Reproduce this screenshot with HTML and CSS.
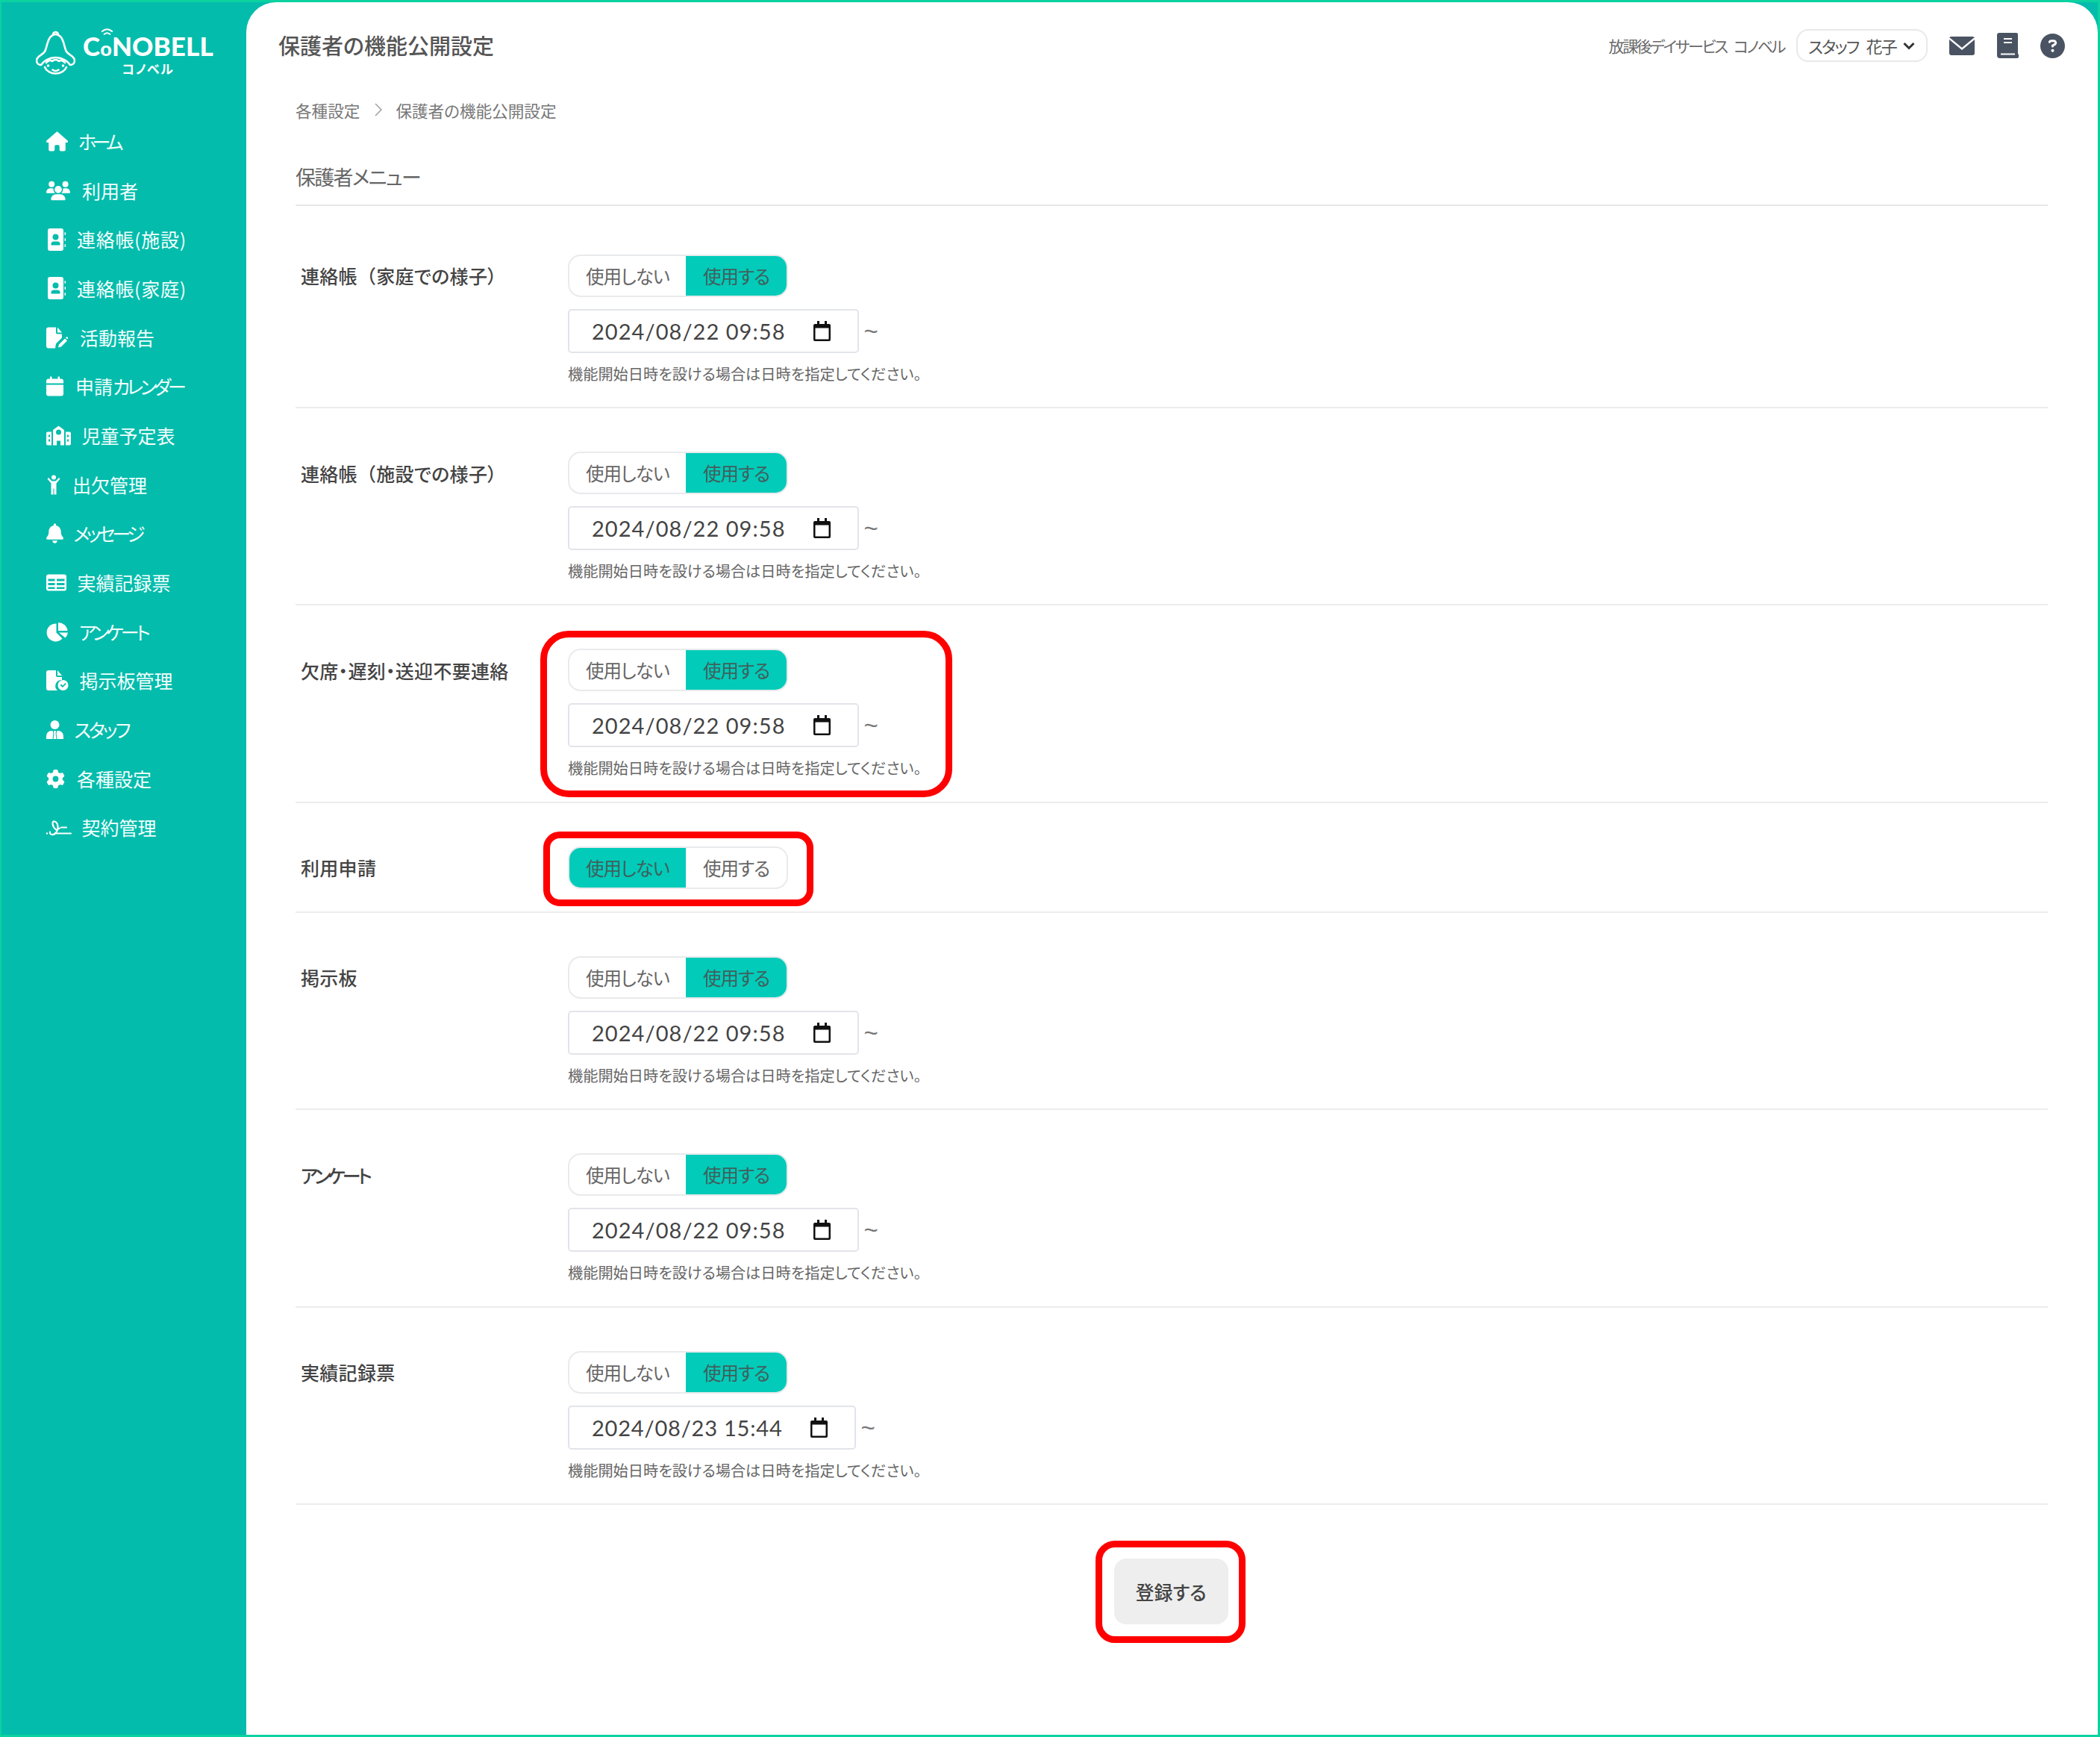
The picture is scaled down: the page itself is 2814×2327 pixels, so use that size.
FILE: index.html
```html
<!DOCTYPE html>
<html lang="ja">
<head>
<meta charset="utf-8">
<title>保護者の機能公開設定</title>
<link rel="stylesheet" href="styles.css">
</head>
<body>
<svg class="defs" width="0" height="0" aria-hidden="true">
  <symbol id="cal" viewBox="0 0 23 27">
    <path d="M5 0h3v4h7V0h3v4h3a2 2 0 0 1 2 2v19a2 2 0 0 1-2 2H2a2 2 0 0 1-2-2V6a2 2 0 0 1 2-2h3zM2.500 9.500V24.500H20.500V9.500z" fill="#111" fill-rule="evenodd"/>
  </symbol>
  <symbol id="contact" viewBox="0 0 24 30">
    <path fill-rule="evenodd" d="M3 0h15a3 3 0 0 1 3 3v24a3 3 0 0 1-3 3H3a3 3 0 0 1-3-3V3a3 3 0 0 1 3-3zM10.500 7.500a4 4 0 1 0 0 8 4 4 0 0 0 0-8zM4.500 22.500h12v-1.500a3.500 3.500 0 0 0-3.500-3.500H8a3.500 3.500 0 0 0-3.500 3.500z"/>
    <rect x="22.500" y="5" width="1.500" height="4" rx=".7"/><rect x="22.500" y="13" width="1.500" height="4" rx=".7"/><rect x="22.500" y="21" width="1.500" height="4" rx=".7"/>
  </symbol>
</svg>
<div class="app">
  <aside class="sidebar">
    <div class="logo">
      <svg class="logo-bell" viewBox="0 0 53 60" fill="none" stroke="#fff" stroke-width="2.600" stroke-linecap="round" stroke-linejoin="round">
        <path d="M23 6.500a3.500 3.500 0 1 1 7 0"/>
        <path d="M20 9C15 14 15 24 12 29C9 34 1 35 1 41C1 45 4 47 7 47C10 42 18 37 26.500 37C35 37 43 42 46 47C49 47 52 45 52 41C52 35 44 34 41 29C38 24 38 14 33 9C29 5 24 5 20 9z"/>
        <path d="M14 44Q18 39 22 42Q26.500 38 31 42Q35 39 39 44"/>
        <path d="M12 50C14 55 20 58.500 26.500 58.500C33 58.500 39 55 41 50"/>
        <path d="M22.500 53.500Q26.500 56.500 30.500 53.500"/>
        <circle cx="16.500" cy="48" r="1.800" fill="#fff" stroke="none"/>
        <circle cx="36.500" cy="48" r="1.800" fill="#fff" stroke="none"/>
      </svg>
      <div class="logo-words">
        <div class="logo-name">C<span class="logo-o">o<svg class="logo-wifi" viewBox="0 0 18 11" fill="none" stroke="#fff" stroke-width="2.200" stroke-linecap="round"><path d="M2 5c4-4 10-4 14 0M5 9c2.500-2 5.500-2 8 0"/></svg></span>NOBELL</div>
        <div class="logo-kana">コノベル</div>
      </div>
    </div>
    <nav class="nav">
      <a class="nav-item nav-home"><svg class="ni" style="width:29px" viewBox="0 0 576 512"><path d="M575.800 255.500c0 18-15 32.100-32 32.100h-32l.7 160.200c0 2.700-.2 5.400-.5 8.100V472c0 22.100-17.900 40-40 40H456c-1.100 0-2.200 0-3.300-.1c-1.400 .1-2.800 .1-4.200 .1H416 392c-22.100 0-40-17.900-40-40V448 384c0-17.700-14.300-32-32-32H256c-17.700 0-32 14.300-32 32v64 24c0 22.100-17.900 40-40 40H160 128.100c-1.500 0-3-.1-4.500-.2c-1.200 .1-2.400 .2-3.600 .2H104c-22.100 0-40-17.900-40-40V360c0-.9 0-1.900 .1-2.800V287.600H32c-18 0-32-14-32-32.100c0-9 3-17 10-24L266.400 8c7-7 15-8 22-8s15 2 21 7L564.800 231.500c8 7 12 15 11 24z"/></svg><span class="kana-home">ホーム</span></a>
      <a class="nav-item"><svg class="ni" style="width:32px" viewBox="0 0 640 512"><path d="M144 0a80 80 0 1 1 0 160A80 80 0 1 1 144 0zM512 0a80 80 0 1 1 0 160A80 80 0 1 1 512 0zM0 298.700C0 239.800 47.800 192 106.700 192h42.700c15.900 0 31 3.500 44.600 9.700c-1.300 7.200-1.900 14.700-1.900 22.300c0 38.200 16.800 72.500 43.300 96c-.2 0-.4 0-.7 0H21.300C9.600 320 0 310.400 0 298.700zM405.300 320c-.2 0-.4 0-.7 0c26.600-23.500 43.300-57.800 43.300-96c0-7.600-.7-15-1.900-22.300c13.600-6.300 28.700-9.700 44.600-9.700h42.700C592.200 192 640 239.800 640 298.700c0 11.800-9.600 21.300-21.300 21.300H405.300zM224 224a96 96 0 1 1 192 0 96 96 0 1 1 -192 0zM128 485.300C128 411.700 187.700 352 261.300 352H378.700C452.300 352 512 411.700 512 485.300c0 14.700-11.900 26.700-26.700 26.700H154.700c-14.700 0-26.700-11.900-26.700-26.700z"/></svg><span>利用者</span></a>
      <a class="nav-item nav-inset"><svg class="ni" style="width:24px;height:30px"><use href="#contact"/></svg><span class="paren-wide">連絡帳(施設)</span></a>
      <a class="nav-item nav-inset"><svg class="ni" style="width:24px;height:30px"><use href="#contact"/></svg><span class="paren-wide">連絡帳(家庭)</span></a>
      <a class="nav-item"><svg class="ni" style="width:29px" viewBox="0 0 29 28"><path d="M3 0h10v7a2 2 0 0 0 2 2h6v5l-8 8-1 6H3a3 3 0 0 1-3-3V3a3 3 0 0 1 3-3zM15 0l6 7h-6z"/><path d="M16 27l1-4 8-8 3 3-8 8zM26 14l1-1a1.500 1.500 0 0 1 2 2l-1 1z"/></svg><span>活動報告</span></a>
      <a class="nav-item"><svg class="ni" style="width:23px" viewBox="0 0 23 26"><path d="M5 0h2.500v3h8V0H18v3h2a3 3 0 0 1 3 3v3H0V6a3 3 0 0 1 3-3h2zM0 11h23v12a3 3 0 0 1-3 3H3a3 3 0 0 1-3-3z"/></svg><span>申請<span class="kana">カレンダー</span></span></a>
      <a class="nav-item nav-tight"><svg class="ni" style="width:33px" viewBox="0 0 33 26"><path fill-rule="evenodd" d="M16.500 0L24 5.500V26H19v-6h-5v6H9V5.500zM16.500 5a3.500 3.500 0 1 0 0 7 3.500 3.500 0 0 0 0-7zM0 10a2 2 0 0 1 2-2h5v18H2a2 2 0 0 1-2-2zM3 12v3h2v-3zM3 18v3h2v-3zM26 8h5a2 2 0 0 1 2 2v14a2 2 0 0 1-2 2h-5zM28 12v3h2v-3zM28 18v3h2v-3z"/></svg><span>児童予定表</span></a>
      <a class="nav-item nav-child"><svg class="ni" style="width:18px" viewBox="0 0 18 26"><circle cx="9" cy="3" r="3"/><path d="M.5 5l1.500-1.500L6.500 8h5L16 3.500 17.500 5 12.500 11v5V26h-3V18h-1V26h-3V11z"/></svg><span>出欠管理</span></a>
      <a class="nav-item nav-tight"><svg class="ni" style="width:23px" viewBox="0 0 448 512"><path d="M224 0c-17.700 0-32 14.300-32 32V51.200C119 66 64 130.600 64 208v18.800c0 47-17.300 92.400-48.500 127.600l-7.400 8.300c-8.400 9.400-10.400 22.900-5.300 34.400S19.400 416 32 416H416c12.600 0 24-7.400 29.200-18.900s3.100-25-5.300-34.400l-7.400-8.300C401.300 319.200 384 273.900 384 226.800V208c0-77.400-55-142-128-156.800V32c0-17.700-14.300-32-32-32zm45.300 493.300c12-12 18.700-28.300 18.700-45.300H224 160c0 17 6.700 33.300 18.700 45.300s28.300 18.700 45.300 18.700s33.300-6.700 45.300-18.700z"/></svg><span class="kana kana-msg">メッセージ</span></a>
      <a class="nav-item nav-tight"><svg class="ni" style="width:27px" viewBox="0 0 27 22"><path fill-rule="evenodd" d="M3 0h21a3 3 0 0 1 3 3v16a3 3 0 0 1-3 3H3a3 3 0 0 1-3-3V3a3 3 0 0 1 3-3zM2.500 6v3h9V6zM14 6v3h10.500V6zM2.500 11.500v3h9v-3zM14 11.500v3h10.500v-3zM2.500 17v2.500h9V17zM14 17v2.500h10.500V17z"/></svg><span>実績記録票</span></a>
      <a class="nav-item nav-inset"><svg class="ni" style="width:27px" viewBox="0 0 27 25"><path d="M11.500 1.500V13.500l8 8A12 12 0 1 1 11.500 1.500z"/><path d="M14 0a12.500 12.500 0 0 1 12.500 11H14z"/><path d="M15 13.500h12a12 12 0 0 1-3.500 7z"/></svg><span class="kana">アンケート</span></a>
      <a class="nav-item nav-tight"><svg class="ni" style="width:30px" viewBox="0 0 30 27"><path d="M3 0h10v7a2 2 0 0 0 2 2h6v4a8 8 0 0 0-6 14H3a3 3 0 0 1-3-3V3a3 3 0 0 1 3-3zM15 0l6 7h-6z"/><path fill-rule="evenodd" d="M22.500 13a7 7 0 1 1 0 14 7 7 0 0 1 0-14zM18.500 20l1.500-1.500 2 2 3.500-3.500 1.200 1.300-4.700 4.700z"/></svg><span>掲示板管理</span></a>
      <a class="nav-item nav-tight"><svg class="ni" style="width:23px" viewBox="0 0 23 25"><circle cx="11.500" cy="6" r="6"/><path d="M6 14l2.500 0 1 3-1 8H0v-3a8 8 0 0 1 6-8zM17 14h-2.500l-1 3 1 8H23v-3a8 8 0 0 0-6-8zM10.500 14h2l.5 2-.5 1 1 8h-4l1-8-.5-1z"/></svg><span class="kana-staff">スタッフ</span></a>
      <a class="nav-item"><svg class="ni" style="width:25px" viewBox="0 0 512 512"><path d="M495.900 166.600c3.200 8.700 .5 18.400-6.400 24.600l-43.300 39.400c1.100 8.300 1.700 16.800 1.700 25.400s-.6 17.100-1.700 25.400l43.300 39.400c6.900 6.200 9.600 15.900 6.400 24.600c-4.400 11.900-9.700 23.300-15.800 34.300l-4.700 8.100c-6.600 11-14 21.400-22.100 31.200c-5.900 7.200-15.700 9.600-24.500 6.800l-55.700-17.700c-13.400 10.300-28.200 18.900-44 25.400l-12.500 57.100c-2 9.100-9 16.300-18.200 17.800c-13.800 2.300-28 3.500-42.500 3.500s-28.700-1.200-42.500-3.500c-9.200-1.500-16.200-8.700-18.200-17.800l-12.500-57.100c-15.800-6.500-30.600-15.100-44-25.400L83.100 425.900c-8.800 2.800-18.600 .3-24.500-6.800c-8.100-9.800-15.500-20.200-22.100-31.200l-4.700-8.100c-6.100-11-11.400-22.400-15.800-34.300c-3.200-8.700-.5-18.400 6.400-24.600l43.300-39.400C64.600 273.100 64 264.600 64 256s.6-17.100 1.700-25.400L22.400 191.200c-6.900-6.200-9.600-15.900-6.400-24.600c4.400-11.900 9.700-23.300 15.800-34.300l4.700-8.100c6.600-11 14-21.400 22.100-31.200c5.900-7.200 15.700-9.600 24.500-6.800l55.700 17.700c13.400-10.300 28.200-18.900 44-25.400l12.500-57.100c2-9.100 9-16.300 18.200-17.800C227.300 1.200 241.500 0 256 0s28.700 1.200 42.500 3.500c9.200 1.500 16.200 8.700 18.200 17.800l12.500 57.100c15.800 6.500 30.600 15.100 44 25.400l55.700-17.700c8.800-2.800 18.600-.3 24.500 6.800c8.100 9.800 15.500 20.200 22.100 31.200l4.700 8.100c6.100 11 11.400 22.400 15.800 34.300zM256 336a80 80 0 1 0 0-160 80 80 0 1 0 0 160z"/></svg><span>各種設定</span></a>
      <a class="nav-item nav-tight"><svg class="ni ni-line" style="width:33px" viewBox="0 0 33 22"><circle cx="1" cy="19" r="1.200" fill="#fff" stroke="none"/><path d="M5 17c-1 4 5 5 8 1c4-5 3-14-2-15c-4-1-3 7 2 11c2 1 3-2 5-2"/><path d="M12 19H33M20 11h7"/></svg><span>契約管理</span></a>
    </nav>
  </aside>

  <main class="main">
    <header class="topbar">
      <h1 class="page-title">保護者の機能公開設定</h1>
      <div class="top-right">
        <span class="facility">放課後デイサービス コノベル</span>
        <div class="user-select"><span>スタッフ 花子</span>
          <svg class="chev" viewBox="0 0 16 11" fill="none" stroke="#333" stroke-width="3"><path d="M1.500 2l6.500 6.500L14.500 2"/></svg>
        </div>
        <svg class="ti ti-mail" viewBox="0 0 34 25"><rect width="34" height="25" rx="3" fill="#4a5362"/><path d="M0 2.500l17 14 17-14" fill="none" stroke="#fff" stroke-width="2.400"/></svg>
        <svg class="ti ti-book" viewBox="0 0 29 34"><path fill="#4a5362" d="M3 0h23a2 2 0 0 1 2 2v26l1 1v3a2 2 0 0 1-2 2H4a4 4 0 0 1-4-4V3a3 3 0 0 1 3-3z"/><path d="M9 8h11M9 13h11M5 28.500h19" stroke="#fff" stroke-width="2" fill="none"/></svg>
        <svg class="ti ti-help" viewBox="0 0 512 512"><path fill="#4a5362" d="M256 512A256 256 0 1 0 256 0a256 256 0 1 0 0 512zM169.800 165.300c7.900-22.300 29.100-37.300 52.800-37.300h58.300c34.900 0 63.100 28.300 63.100 63.100c0 22.600-12.100 43.500-31.700 54.800L280 264.400c-.2 13-10.900 23.600-24 23.600c-13.300 0-24-10.700-24-24V250.500c0-8.600 4.600-16.500 12.100-20.800l44.300-25.400c4.700-2.700 7.600-7.700 7.600-13.100c0-8.400-6.800-15.100-15.100-15.100H222.600c-3.400 0-6.400 2.100-7.500 5.300l-.4 1.200c-4.400 12.500-18.200 19-30.600 14.600s-19-18.200-14.600-30.600l.4-1.200zM224 352a32 32 0 1 1 64 0 32 32 0 1 1 -64 0z"/></svg>
      </div>
    </header>

    <div class="content">
      <div class="breadcrumb"><span>各種設定</span><svg class="crumb-sep" viewBox="0 0 10 18" fill="none" stroke="#999" stroke-width="1.400"><path d="M1 1l8 8-8 8"/></svg><span>保護者の機能公開設定</span></div>
      <h2 class="section-title">保護者メニュー</h2>

      <section class="row row-first">
        <div class="row-label"><span>連絡帳<span class="full-paren">（</span>家庭での様子）</span></div>
        <div class="row-ctrl">
          <div class="toggle"><span class="opt">使用しない</span><span class="opt on">使用する</span></div>
          <div class="date-line"><div class="date-input"><span>2024/08/22 09:58</span><svg class="cal"><use href="#cal"/></svg></div><span class="tilde">~</span></div>
          <p class="hint">機能開始日時を設ける場合は日時を指定してください。</p>
        </div>
      </section>

      <section class="row">
        <div class="row-label"><span>連絡帳<span class="full-paren">（</span>施設での様子）</span></div>
        <div class="row-ctrl">
          <div class="toggle"><span class="opt">使用しない</span><span class="opt on">使用する</span></div>
          <div class="date-line"><div class="date-input"><span>2024/08/22 09:58</span><svg class="cal"><use href="#cal"/></svg></div><span class="tilde">~</span></div>
          <p class="hint">機能開始日時を設ける場合は日時を指定してください。</p>
        </div>
      </section>

      <section class="row">
        <div class="row-label">欠席・遅刻・送迎不要連絡</div>
        <div class="row-ctrl">
          <div class="mark mark-a"></div>
          <div class="toggle"><span class="opt">使用しない</span><span class="opt on">使用する</span></div>
          <div class="date-line"><div class="date-input"><span>2024/08/22 09:58</span><svg class="cal"><use href="#cal"/></svg></div><span class="tilde">~</span></div>
          <p class="hint">機能開始日時を設ける場合は日時を指定してください。</p>
        </div>
      </section>

      <section class="row row-short">
        <div class="row-label">利用申請</div>
        <div class="row-ctrl">
          <div class="mark mark-b"></div>
          <div class="toggle"><span class="opt on">使用しない</span><span class="opt">使用する</span></div>
        </div>
      </section>

      <section class="row">
        <div class="row-label">掲示板</div>
        <div class="row-ctrl">
          <div class="toggle"><span class="opt">使用しない</span><span class="opt on">使用する</span></div>
          <div class="date-line"><div class="date-input"><span>2024/08/22 09:58</span><svg class="cal"><use href="#cal"/></svg></div><span class="tilde">~</span></div>
          <p class="hint">機能開始日時を設ける場合は日時を指定してください。</p>
        </div>
      </section>

      <section class="row">
        <div class="row-label"><span class="kana">アンケート</span></div>
        <div class="row-ctrl">
          <div class="toggle"><span class="opt">使用しない</span><span class="opt on">使用する</span></div>
          <div class="date-line"><div class="date-input"><span>2024/08/22 09:58</span><svg class="cal"><use href="#cal"/></svg></div><span class="tilde">~</span></div>
          <p class="hint">機能開始日時を設ける場合は日時を指定してください。</p>
        </div>
      </section>

      <section class="row">
        <div class="row-label">実績記録票</div>
        <div class="row-ctrl">
          <div class="toggle"><span class="opt">使用しない</span><span class="opt on">使用する</span></div>
          <div class="date-line"><div class="date-input date-narrow"><span>2024/08/23 15:44</span><svg class="cal"><use href="#cal"/></svg></div><span class="tilde">~</span></div>
          <p class="hint">機能開始日時を設ける場合は日時を指定してください。</p>
        </div>
      </section>

      <div class="actions">
        <div class="submit-wrap">
          <div class="mark mark-c"></div>
          <button class="submit" type="button">登録する</button>
        </div>
      </div>
    </div>
  </main>
</div>
</body>
</html>
```
FILE: styles.css
```css
* { box-sizing: border-box; }
html, body { margin: 0; padding: 0; }
body {
  width: 2814px;
  height: 2327px;
  overflow: hidden;
  font-family: "Noto Sans CJK JP", "Noto Sans", sans-serif;
  font-feature-settings: "palt";
  color: #555;
  background: #fff;
}
.defs { position: absolute; }

.app {
  display: flex;
  width: 2814px;
  height: 2327px;
  background: #04bcac;
  border: solid #0bd2a0;
  border-width: 3px 3px 3px 2px;
}

/* Sidebar */
.sidebar { width: 328px; flex: none; color: #fff; }
.logo {
  display: flex;
  align-items: flex-start;
  gap: 10px;
  margin: 37px 0 0 46px;
  height: 59px;
}
.logo-bell { width: 53px; height: 60px; flex: none; }
.logo-words { display: flex; flex-direction: column; align-items: center; margin-top: 5px; }
.logo-name {
  font-family: Lato, "Noto Sans", sans-serif;
  font-weight: 900;
  font-size: 35px;
  line-height: 32px;
  letter-spacing: .1px;
  color: #fff;
}
.logo-o { position: relative; font-size: 27px; }
.logo-wifi { position: absolute; left: 1px; top: -11px; width: 17px; height: 11px; }
.logo-kana {
  font-size: 17px;
  font-weight: 700;
  line-height: 20px;
  letter-spacing: 1.500px;
  margin-top: 1px;
}
.nav { margin-top: 57.500px; display: flex; flex-direction: column; }
.nav-item {
  display: flex;
  align-items: center;
  gap: 16px;
  height: 65.7px;
  padding-left: 60px;
  font-size: 25px;
  line-height: 1;
  color: #f4fffd;
}
.nav-home { gap: 14px; }
.nav-inset { padding-left: 62px; gap: 15px; }
.nav-child { padding-left: 61px; gap: 16px; }
.nav-tight { gap: 14.500px; }
.ni { height: 29px; flex: none; fill: #fff; overflow: visible; }
.ni-line { fill: none; stroke: #fff; stroke-width: 2.200; stroke-linecap: round; stroke-linejoin: round; }
.kana { letter-spacing: -4px; }
.kana-msg { letter-spacing: -4.500px; margin-left: -1px; }
.kana-home { letter-spacing: -5.500px; }
.kana-staff { letter-spacing: -3px; }
.paren-wide { letter-spacing: .7px; }

/* Main */
.main {
  flex: 1;
  min-width: 0;
  background: #fff;
  border-radius: 40px 40px 0 0;
}
.topbar {
  display: flex;
  align-items: center;
  justify-content: space-between;
  height: 116px;
  padding: 0 44px 0 43px;
}
.page-title {
  margin: -2px 0 0;
  font-size: 29px;
  font-weight: 500;
  color: #555;
  line-height: 1.2;
}
.top-right { display: flex; align-items: center; }
.facility {
  font-size: 21px;
  letter-spacing: -2.400px;
  word-spacing: 7px;
  color: #6a6a6a;
  margin-right: 16px;
  white-space: nowrap;
}
.user-select {
  display: flex;
  align-items: center;
  justify-content: space-between;
  width: 176px;
  height: 44px;
  padding: 0 15px 0 14px;
  border: 2px solid #e9e9e9;
  border-radius: 16px;
  font-size: 22px;
  letter-spacing: -1.800px;
  word-spacing: 7px;
  color: #555;
  margin-right: 29px;
  white-space: nowrap;
}
.chev { width: 16px; height: 11px; flex: none; }
.ti { flex: none; }
.ti-mail { width: 34px; height: 25px; margin-right: 30px; }
.ti-book { width: 29px; height: 34px; margin-right: 29px; }
.ti-help { width: 33px; height: 33px; }

.content { padding: 0 67px 0 66px; }
.breadcrumb {
  display: flex;
  align-items: center;
  height: 30px;
  margin-top: 13px;
  font-size: 21.600px;
  color: #777;
}
.crumb-sep { width: 10px; height: 18px; margin: 0 18px 0 20px; }
.section-title {
  margin: 0;
  height: 114px;
  padding-top: 53.500px;
  border-bottom: 2px solid #e8e8e8;
  font-size: 27px;
  font-weight: 400;
  line-height: 42px;
  letter-spacing: -1.700px;
  color: #666;
}

/* Form rows */
.row {
  display: flex;
  height: 264.400px;
  padding-top: 58px;
  border-bottom: 2px solid #ececec;
}
.row-first { height: 271px; padding-top: 64.500px; }
.row-short { height: 147px; }
.row-label {
  width: 365px;
  flex: none;
  padding-left: 7px;
  height: 57px;
  display: flex;
  align-items: center;
  font-size: 25px;
  font-weight: 500;
  letter-spacing: .3px;
  color: #444;
}
.row-label .kana { letter-spacing: -4px; }
.full-paren { font-feature-settings: normal; }
.row-ctrl { position: relative; }
.toggle {
  display: inline-flex;
  height: 57px;
  vertical-align: top;
  border: 2px solid #e8eaec;
  border-radius: 17px;
  overflow: hidden;
  font-size: 24.500px;
  letter-spacing: -1px;
  color: #666;
}
.opt { display: flex; align-items: center; padding: 0 22px; }
.opt + .opt { padding: 0 23px 0 23px; }
.opt.on { background: #02cbb9; color: #40605c; }
.date-line { display: flex; align-items: center; margin-top: 16px; }
.date-input {
  display: flex;
  align-items: center;
  height: 59px;
  padding: 0 36px 0 30px;
  border: 2px solid #e2e4ea;
  border-radius: 5px;
  font-family: Lato, "Noto Sans", sans-serif;
  font-size: 29px;
  letter-spacing: 1.050px;
  color: #444;
}
.date-narrow { letter-spacing: .8px; }
.cal { width: 23px; height: 27px; margin-left: 37px; flex: none; }
.tilde { margin-left: 7px; font-size: 33px; line-height: 1; color: #777; font-family: "Liberation Sans", sans-serif; }
.hint {
  margin: 12px 0 0;
  font-size: 20.200px;
  line-height: 32px;
  color: #666;
  white-space: nowrap;
}

/* Annotation outlines laid over the form */
.mark {
  position: absolute;
  border: 9px solid #ff0000;
  pointer-events: none;
}
.mark-a { left: -37px; top: -24px; width: 552px; height: 223px; border-radius: 38px; }
.mark-b { left: -33px; top: -20px; width: 362px; height: 100px; border-radius: 22px; }
.mark-c { left: -25px; top: -24px; width: 201px; height: 137px; border-radius: 26px; }

.actions { display: flex; justify-content: center; padding: 72px 2px 0 0; }
.submit-wrap { position: relative; }
.submit {
  display: block;
  width: 153px;
  height: 88px;
  border: 0;
  border-radius: 16px;
  background: #eeeeee;
  font: inherit;
  font-feature-settings: "palt";
  font-size: 25px;
  font-weight: 500;
  color: #444;
}
```
